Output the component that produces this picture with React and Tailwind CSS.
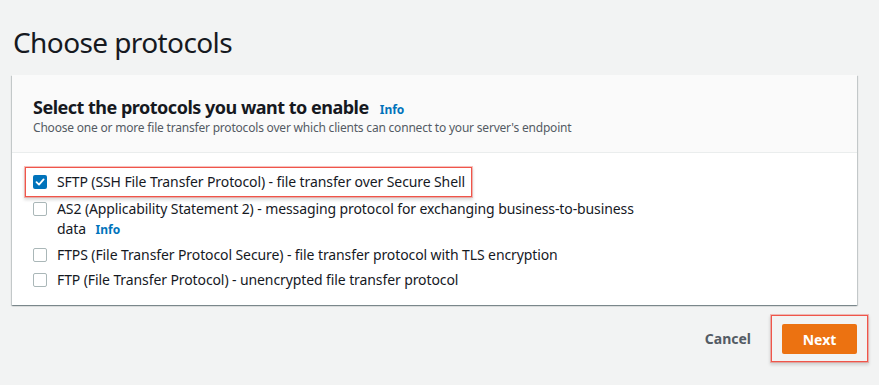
import React from "react";

function Box({ checked }) {
  if (checked) {
    return (
      <span className="flex h-[14px] w-[14px] shrink-0 items-center justify-center rounded-[2px] bg-[#0073bb]">
        <svg width="10" height="10" viewBox="0 0 10 10" fill="none">
          <path d="M1.5 5.2 L4 7.6 L8.6 2.4" stroke="#fff" strokeWidth="1.8" strokeLinecap="round" strokeLinejoin="round" />
        </svg>
      </span>
    );
  }
  return <span className="block h-[14px] w-[14px] shrink-0 rounded-[2px] border border-[#aab7b8] bg-white" />;
}

export default function App() {
  return (
    <div className="min-h-screen bg-[#f2f3f3] font-['Noto_Sans',sans-serif] text-[#16191f]">
      <h1 className="pl-[13px] pt-[22px] text-[28px] leading-[40px] font-normal tracking-[-0.6px]">Choose protocols</h1>
      <div className="ml-[12px] mr-[22px] mt-[13px] bg-white shadow-[0_1px_1px_0_rgba(0,28,36,0.3),1px_1px_1px_0_rgba(0,28,36,0.15),-1px_1px_1px_0_rgba(0,28,36,0.15)]">
        <div className="border-b border-[#eaeded] bg-[#fafafa] px-[21px] pb-[16px] pt-[19px]">
          <div className="flex items-baseline gap-[11px]">
            <h2 className="text-[18px] font-bold leading-[26px] tracking-[-0.5px]">Select the protocols you want to enable</h2>
            <span className="text-[12px] font-bold text-[#0073bb]">Info</span>
          </div>
          <p className="text-[12px] leading-[16px] tracking-[-0.2px] text-[#545b64]">
            Choose one or more file transfer protocols over which clients can connect to your server's endpoint
          </p>
        </div>
        <div className="px-[13px] pb-[15px] pt-[14px] text-[14px] leading-[20px] tracking-[-0.1px]">
          <div className="inline-flex items-center gap-[10px] border border-[#f0554a] py-[4px] pl-[7px] pr-[6px] shadow-[0_0_0_1px_rgba(240,85,74,0.35),0_2px_3px_1px_rgba(0,0,0,0.14)]">
            <Box checked />
            <span>SFTP (SSH File Transfer Protocol) - file transfer over Secure Shell</span>
          </div>
          <div className="mt-[2px] flex flex-col gap-[5px] pl-[8px]">
            <div className="flex items-start gap-[10px]">
              <span className="mt-[3px] flex"><Box /></span>
              <span>
                AS2 (Applicability Statement 2) - messaging protocol for exchanging business-to-business
                <br />
                data <span className="ml-[6px] text-[12px] font-bold tracking-normal text-[#0073bb]">Info</span>
              </span>
            </div>
            <div className="flex items-center gap-[10px]">
              <Box />
              <span>FTPS (File Transfer Protocol Secure) - file transfer protocol with TLS encryption</span>
            </div>
            <div className="flex items-center gap-[10px]">
              <Box />
              <span>FTP (File Transfer Protocol) - unencrypted file transfer protocol</span>
            </div>
          </div>
        </div>
      </div>
      <div className="mr-[11px] mt-[10px] flex items-center justify-end gap-[20px]">
        <span className="text-[14px] font-bold text-[#545b64]">Cancel</span>
        <div className="border border-[#f0554a] px-[10px] pb-[7px] pt-[8px] shadow-[0_0_0_1px_rgba(240,85,74,0.35),0_2px_3px_1px_rgba(0,0,0,0.14)]">
          <button className="block h-[30px] w-[75px] rounded-[2px] bg-[#ec7211] text-[14px] font-bold text-white">Next</button>
        </div>
      </div>
    </div>
  );
}
